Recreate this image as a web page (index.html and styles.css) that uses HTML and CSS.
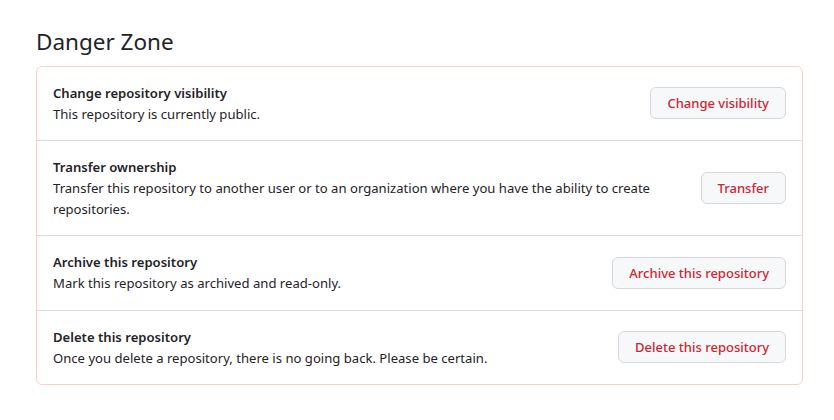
FILE: index.html
```html
<!DOCTYPE html>
<html>
  <head>
    <meta charset="utf-8" />
    <title>Danger Zone</title>
    <link rel="stylesheet" href="styles.css">
  </head>

  <body>
    <div class="settings">
      <h2 class="subhead">Danger Zone</h2>

      <div class="danger-box">
        <div class="danger-row">
          <div class="danger-text">
            <strong>Change repository visibility</strong>
            <p>This repository is currently public.</p>
          </div>
          <button type="button" class="btn-danger">Change visibility</button>
        </div>

        <div class="danger-row">
          <div class="danger-text">
            <strong>Transfer ownership</strong>
            <p>Transfer this repository to another user or to an organization where you have the ability to create repositories.</p>
          </div>
          <button type="button" class="btn-danger">Transfer</button>
        </div>

        <div class="danger-row">
          <div class="danger-text">
            <strong>Archive this repository</strong>
            <p>Mark this repository as archived and read-only.</p>
          </div>
          <button type="button" class="btn-danger">Archive this repository</button>
        </div>

        <div class="danger-row">
          <div class="danger-text">
            <strong>Delete this repository</strong>
            <p>Once you delete a repository, there is no going back. Please be certain.</p>
          </div>
          <button type="button" class="btn-danger">Delete this repository</button>
        </div>
      </div>
    </div>
  </body>
</html>
```

FILE: styles.css
```css
body {
  margin: 0;
  background: #ffffff;
  color: #1f2328;
  font-family: "Noto Sans", "Open Sans", sans-serif;
  font-size: 13.1px;
  line-height: 21px;
}

.settings {
  padding: 26.5px 31px 0 36px;
}

.subhead {
  margin: 0 0 9px 0;
  font-size: 22.5px;
  font-weight: 400;
  line-height: 30px;
}

.danger-box {
  border: 1px solid #ffcecb;
  border-radius: 6px;
}

.danger-row {
  display: flex;
  align-items: center;
  gap: 16px;
  padding: 16px;
  border-top: 1px solid #d8dee4;
}

.danger-row:first-child {
  border-top: 0;
}

.danger-text {
  flex: 1;
}

.danger-text strong {
  display: block;
  font-weight: 600;
}

.danger-text p {
  margin: 0;
  line-height: 20.5px;
}

.btn-danger {
  flex-shrink: 0;
  height: 32px;
  padding: 0 16px;
  background-color: #f6f8fa;
  border: 1px solid #d5d8da;
  border-radius: 6px;
  color: #d1242f;
  font-family: inherit;
  font-size: 13px;
  font-weight: 500;
  cursor: pointer;
}
```
